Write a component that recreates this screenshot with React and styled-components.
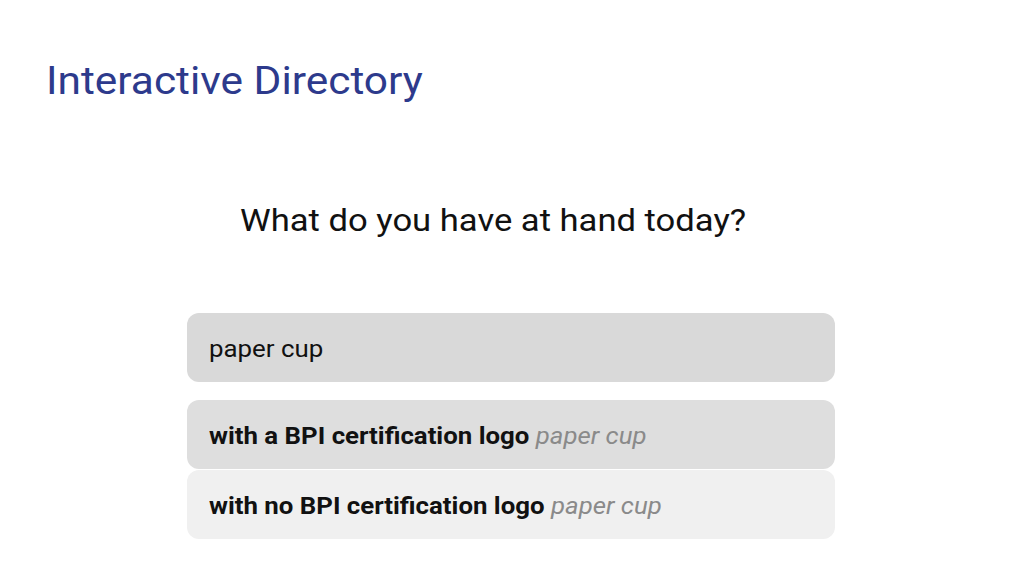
import React from "react";
import styled, { createGlobalStyle } from "styled-components";

const Global = createGlobalStyle`
  html, body { margin: 0; padding: 0; background: #ffffff; }
  body { font-family: Roboto, "Noto Sans", sans-serif; }
`;

const Page = styled.div`
  width: 1024px;
  height: 576px;
  display: flex;
  flex-direction: column;
  background: #fff;
`;

const Stretch = styled.span`
  display: inline-block;
  white-space: nowrap;
  transform: scaleX(${(p) => p.$x});
  transform-origin: left center;
`;

const Title = styled.h1`
  margin: 0;
  padding: 58px 0 0 46px;
  font-size: 38px;
  line-height: 46px;
  font-weight: 400;
  color: #2d3a8c;
`;

const Question = styled.h2`
  margin: 96px 0 0 0;
  padding-left: 240px;
  font-size: 32px;
  line-height: 40px;
  font-weight: 400;
  color: #111;
`;

const Options = styled.div`
  display: flex;
  flex-direction: column;
  width: 648px;
  margin: 73px 0 0 187px;
`;

const Option = styled.div`
  height: 69px;
  box-sizing: border-box;
  display: flex;
  align-items: center;
  padding: 2px 22px 0;
  border-radius: 12px;
  background: ${(p) => p.$bg};
  margin-top: ${(p) => p.$gap}px;
  font-size: 24px;
  color: #111;
`;

const Strong = styled.span`
  font-weight: 700;
  color: #111;
`;

const Hint = styled.span`
  font-style: italic;
  color: #8a8a8a;
  margin-left: 6px;
`;

export default function App() {
  return (
    <Page>
      <Global />
      <Title>
        <Stretch $x={1.116}>Interactive Directory</Stretch>
      </Title>
      <Question>
        <Stretch $x={1.081}>What do you have at hand today?</Stretch>
      </Question>
      <Options>
        <Option $bg="#d9d9d9" $gap={0}>
          <Stretch $x={1.077}>paper cup</Stretch>
        </Option>
        <Option $bg="#dedede" $gap={18}>
          <Stretch $x={1.075}>
            <Strong>with a BPI certification logo</Strong>
            <Hint>paper cup</Hint>
          </Stretch>
        </Option>
        <Option $bg="#f0f0f0" $gap={1}>
          <Stretch $x={1.075}>
            <Strong>with no BPI certification logo</Strong>
            <Hint>paper cup</Hint>
          </Stretch>
        </Option>
      </Options>
    </Page>
  );
}
